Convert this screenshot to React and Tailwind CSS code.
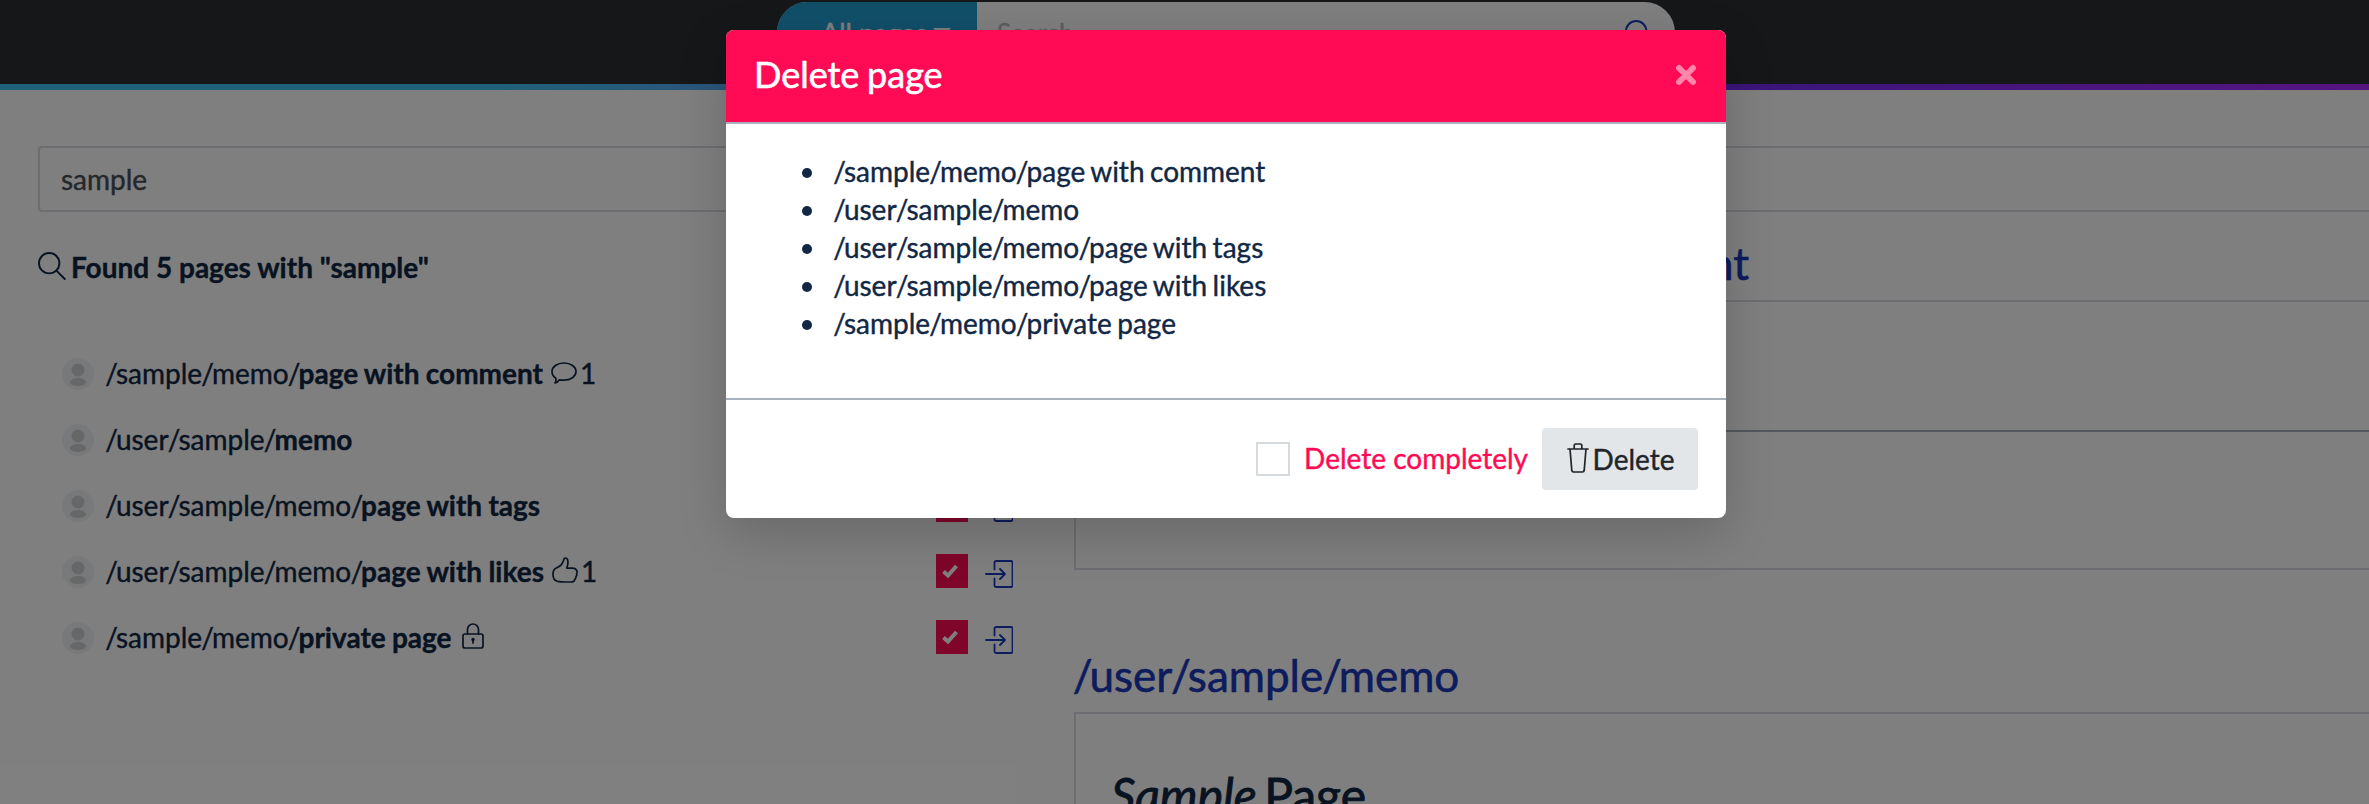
import React from "react";

const stroke = { fill: "none", stroke: "currentColor", strokeLinecap: "round", strokeLinejoin: "round" };

const Magnifier = ({ className }) => (
  <svg viewBox="0 0 28 28" className={className} {...stroke} strokeWidth="1.9">
    <circle cx="11.2" cy="11.2" r="10.2" />
    <path d="M18.4 18.6 26.8 27" />
  </svg>
);

const Bubble = () => (
  <svg viewBox="0 0 26 22" className="-mt-0.5 h-[22px] w-[26px]" {...stroke} strokeWidth="1.7">
    <path d="M13 1C6.200 1 1 4.800 1 9.600c0 3 1.400 5.200 3.900 6.700 .3 1.600 0 3.200-.9 4.700 1.900-.4 3.400-1.500 4.300-3.200 1.400.3 3 .4 4.700.4 6.800 0 12-3.800 12-8.600S19.800 1 13 1Z" />
  </svg>
);

const Like = () => (
  <svg viewBox="0 0 26 26" className="-mt-1 h-[26px] w-[26px]" {...stroke} strokeWidth="1.7">
    <path d="M13.200 1c-1 0-1.400 1-1.700 2.500C10.800 6.500 7.500 9.800 3.800 11.200 1.500 12.200 1 14.500 1 17.500c0 4.500 1.500 6 4.500 6.800 2.500.6 5 .7 8 .7h5.200c3 0 4-1 4.200-2.900.9-.5 1.200-1.200 1-2.500.9-.8 1.100-1.700.7-2.900.6-1.200.6-2.200.1-3.200-.6-1.800-1.700-2.400-4.200-2.400h-5.700c1-2.600 1.400-4.900 1-7.300C15.600 1.700 14.600 1 13.200 1Z" />
  </svg>
);

const Lock = () => (
  <svg viewBox="0 0 22 26" className="-mt-1 ml-0.5 h-[26px] w-[22px]" {...stroke} strokeWidth="1.700">
    <rect x="1" y="11" width="20" height="14" rx="2" />
    <path d="M5.500 11V6.500a5.500 5.500 0 0 1 11 0V11M11 16.500v3.500" />
    <circle cx="11" cy="16.500" r=".9" />
  </svg>
);

const Enter = () => (
  <svg viewBox="0 0 28 28" className="h-7 w-7" {...stroke} strokeWidth="1.8">
    <path d="M9.500 9.500V2.500A1.500 1.500 0 0 1 11 1h15a1.500 1.500 0 0 1 1.500 1.500v23A1.500 1.500 0 0 1 26 27H11a1.500 1.500 0 0 1-1.500-1.500v-7M1 14h19M15 9l5 5-5 5" />
  </svg>
);

const Trash = () => (
  <svg viewBox="0 0 22 30" className="-mt-0.5 h-[30px] w-[22px]" {...stroke} strokeWidth="1.7">
    <path d="M1 6h20M7.200 6V2.500A1.500 1.500 0 0 1 8.700 1h4.600a1.500 1.500 0 0 1 1.500 1.500V6M3 6l1.800 21.500A1.800 1.800 0 0 0 6.500 29h9a1.800 1.800 0 0 0 1.700-1.500L19 6" />
  </svg>
);

const Avatar = () => (
  <svg viewBox="0 0 32 32" className="mr-3 h-8 w-8">
    <circle cx="16" cy="16" r="16" fill="#f0f2f4" />
    <circle cx="16" cy="12" r="6.500" fill="#cfcfcf" />
    <path d="M8 25c0-3.500 3.500-5 8-5s8 1.500 8 5c-1 1.800-4 3-8 3s-7-1.200-8-3Z" fill="#cfcfcf" />
  </svg>
);

const rows = [
  { dir: "/sample/memo/", name: "page with comment", icon: <Bubble />, count: 1 },
  { dir: "/user/sample/", name: "memo" },
  { dir: "/user/sample/memo/", name: "page with tags" },
  { dir: "/user/sample/memo/", name: "page with likes", icon: <Like />, count: 1 },
  { dir: "/sample/memo/", name: "private page", icon: <Lock /> },
];

/* A page path, with its slashes set slightly tight. */
function Path({ text }) {
  return text.split(/(\/)/).filter(Boolean).map((part, i) =>
    part === "/" ? <span key={i} className="mr-[-0.07em] ml-[-0.03em]">/</span> : <React.Fragment key={i}>{part}</React.Fragment>
  );
}

function Row({ dir, name, icon, count }) {
  return (
    <li className="flex h-[66px] items-center pr-[25px] pl-6">
      <Avatar />
      <span className="-mt-0.5 [word-spacing:-0.02em]"><Path text={dir} /><b>{name}</b></span>
      {icon && <span className="ml-2">{icon}</span>}
      {count && <span className="-mt-0.5 ml-[3px]">{count}</span>}
      <span className="-mt-0.5 ml-auto flex h-[34px] w-8 items-center justify-center bg-[#ff0a54]">
        <svg viewBox="0 0 16 14" className="mr-1 h-[14px] w-4" fill="none" stroke="#fff" strokeWidth="4">
          <path d="M1.500 7.500 6 11.500 14.500 2" />
        </svg>
      </span>
      <span className="mt-[3px] ml-[17px] text-[#1a38bb]"><Enter /></span>
    </li>
  );
}

function Results() {
  return (
    <section className="w-[1000px]">
      <h3 className="flex h-[34px] items-center font-bold">
        <Magnifier className="-mt-0.5 mr-[5px] h-7 w-7" />
        <span>Found 5 pages with "sample"</span>
      </h3>
      <ul className="mt-[57px]">
        {rows.map((r) => <Row key={r.dir + r.name} {...r} />)}
      </ul>
    </section>
  );
}

function Preview() {
  return (
    <section className="-mt-[11px] ml-9 min-w-0 flex-1">
      <h2 className="h-[61px] text-[44px] leading-[48px] text-[#1a38bb] [word-spacing:-0.09em] [-webkit-text-stroke:0.6px]"><Path text="/sample/memo/page with comment" /></h2>
      <div className="h-[270px] border-2 border-[#d8d8e2] pt-32">
        <hr className="border-t-2 border-[#a8b1b8]" />
      </div>
      <h2 className="mt-[81px] h-[61px] text-[44px] leading-[48px] text-[#1a38bb] [-webkit-text-stroke:0.6px]"><Path text="/user/sample/memo" /></h2>
      <div className="h-[400px] border-2 border-[#d8d8e2] pt-[52px] pl-[35px]">
        <h1 className="text-[48px] leading-[58px] [word-spacing:-0.1em] [-webkit-text-stroke:0.9px]"><i>Sample</i> Page</h1>
      </div>
    </section>
  );
}

function Modal() {
  return (
    <div className="h-[488px] w-[1000px] overflow-hidden rounded-[8px] bg-white shadow-[0_16px_48px_rgba(0,0,0,0.175)]">
      <header className="flex h-[94px] items-center justify-between border-b-2 border-[#a9b1bc] bg-[#ff0a54] px-7 pb-1 text-white">
        <h2 className="text-[36px] [word-spacing:-0.04em] [-webkit-text-stroke:0.6px]">Delete page</h2>
        <svg viewBox="0 0 22 22" className="mt-0.5 mr-px h-[22px] w-[22px] opacity-50" fill="none" stroke="#fff" strokeWidth="6" strokeLinecap="round">
          <path d="M4 4 18 18M18 4 4 18" />
        </svg>
      </header>
      <div className="h-[276px] border-b-2 border-[#a9b1bc] px-7 pt-7">
        <ul className="pl-12 leading-[38px] [word-spacing:-0.06em]">
          {rows.map((r) => (
            <li key={r.dir + r.name} className="flex items-center">
              <span className="mt-[3px] mr-[22px] h-[10px] w-[10px] rounded-full bg-[#112744]" />
              <span><Path text={r.dir + r.name} /></span>
            </li>
          ))}
        </ul>
      </div>
      <footer className="flex h-[118px] items-center justify-end px-7">
        <span className="h-[34px] w-[34px] border-2 border-[#d5dadf]" />
        <span className="-mt-[3px] mr-3.5 ml-3.5 text-[#ff0a54]">Delete completely</span>
        <button className="flex h-[62px] w-[156px] items-center justify-center rounded-[4px] bg-[#e2e6e9] pl-px text-[#212529]">
          <Trash />
          <span className="ml-1">Delete</span>
        </button>
      </footer>
    </div>
  );
}

export default function App() {
  return (
    <div className="relative h-[804px] w-full overflow-hidden bg-white font-['Lato',sans-serif] text-[28px] leading-[42px] text-[#112744] [-webkit-text-stroke:0.4px]">
      <header className="flex h-[84px] items-start justify-center bg-[#2c2f32] pt-0.5">
        <div className="mr-[-83px] flex h-[61px] w-[898px] overflow-hidden rounded-full bg-white">
          <div className="flex w-[200px] items-center bg-[#239fd2] pl-[44px] text-[27px] text-white">
            <span>All pages</span>
            <span className="ml-1.5 border-x-[9px] border-t-[9px] border-x-transparent border-t-white" />
          </div>
          <div className="flex flex-1 items-center justify-between pr-[22px] pl-5 text-[26px] text-[#b8bcc0]">
            <span>Search</span>
            <Magnifier className="mt-0.5 h-7 w-7 text-[#1a38bb]" />
          </div>
        </div>
      </header>
      <div className="h-1.5 bg-linear-to-r from-[#3ec3f5] from-20% via-[#742af4] via-73% to-[#ad28ff]" />
      <main className="pt-14 pl-[38px]">
        <div className="flex h-[66px] w-[2400px] items-center rounded-[4px] border-2 border-[#d8d8e2] pl-[21px] text-[#495057]">sample</div>
        <div className="mt-[38px] flex w-[2400px]">
          <Results />
          <Preview />
        </div>
      </main>
      <div className="absolute inset-0 flex items-start justify-center bg-black/50 pt-[30px] pl-[83px]">
        <Modal />
      </div>
    </div>
  );
}
